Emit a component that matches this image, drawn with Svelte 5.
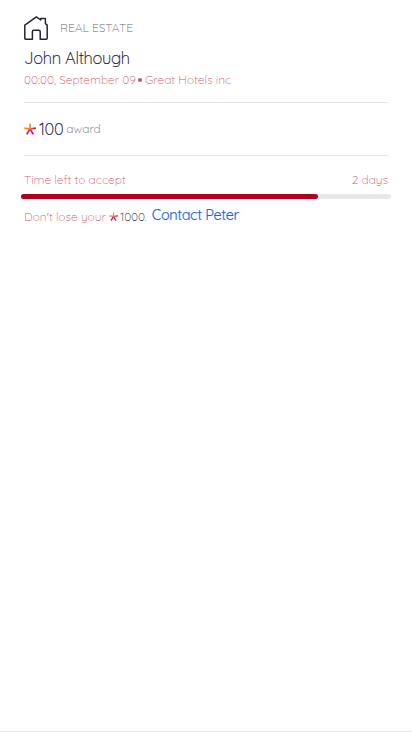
<script>
  const progress = 80.4;
</script>

{#snippet star(size)}
  <svg class="star" width={size} height={size} viewBox="0 0 12 12" fill="none" stroke-width="1.7">
    <defs>
      <linearGradient id="warm" x1="0" y1="0" x2="12" y2="0" gradientUnits="userSpaceOnUse">
        <stop offset="0" stop-color="#ffa000" />
        <stop offset="0.55" stop-color="#f0604d" />
        <stop offset="1" stop-color="#c80050" />
      </linearGradient>
      <linearGradient id="pink" x1="0" y1="5" x2="0" y2="12" gradientUnits="userSpaceOnUse">
        <stop offset="0" stop-color="#e0105a" />
        <stop offset="1" stop-color="#e000b8" />
      </linearGradient>
    </defs>
    <path d="M6 5.9 2.7 11.4M6 5.9l3.3 5.5" stroke="url(#pink)" />
    <path d="M.1 5.2 6 5.8l5.9-.6" stroke="url(#warm)" />
    <path d="M6.1 5.9 6 .6" stroke="#f58a45" />
  </svg>
{/snippet}

<main>
  <header>
    <svg width="24" height="24" viewBox="0 0 24 24" fill="none" stroke="#25233c" stroke-width="1.5" stroke-linejoin="round">
      <path d="M.8 9.1 12.4.9l4.3 3.1V2.5h4.7v5.1l1.8 1.5v13.2q0 .9-.9.9h-6.1v-7.4q0-1.5-1.5-1.5H9.9q-1.5 0-1.5 1.5v7.4H1.7q-.9 0-.9-.9Z" />
    </svg>
    <span class="category">REAL ESTATE</span>
  </header>
  <h1>John Although</h1>
  <div class="details"><span>00:00, September 09</span><i></i><span>Great Hotels inc</span></div>
  <section class="award">
    {@render star(12)}
    <strong>100</strong>
    <span class="label">award</span>
  </section>
  <section class="deadline">
    <div class="row"><span>Time left to accept</span><span>2 days</span></div>
    <div class="track"><div class="fill" style="width: {progress}%"></div></div>
    <div class="hint">
      <span>Don't lose your</span>
      {@render star(9)}
      <span class="amount">1000<em>.</em></span>
      <span class="contact">Contact Peter</span>
    </div>
  </section>
</main>

<style>
  :global(body) { background: #fff; }
  main {
    box-sizing: border-box;
    height: 732px;
    padding: 16px 24px 0;
    border-bottom: 1px solid #e4e4e4;
    font-family: Quicksand, Lato, sans-serif;
    font-size: 12px;
    font-weight: 300;
    letter-spacing: -0.02px;
    color: #c95c67;
    white-space: nowrap;
    overflow: hidden;
  }
  header { display: flex; height: 24px; align-items: center; gap: 12px; }
  header svg, .star { flex: none; display: block; }
  .category { margin-top: -2px; color: #66656f; }
  h1 {
    margin: 6px 0 1px;
    font-size: 16.5px;
    line-height: 24px;
    font-weight: 300;
    letter-spacing: -0.3px;
    color: #25233c;
    -webkit-text-stroke: 0.2px;
  }
  .details {
    display: flex;
    align-items: flex-start;
    height: 31px;
    line-height: 18px;
    border-bottom: 1px solid #e5e5e5;
  }
  .details i { width: 4px; height: 4px; margin: 7px 3px 0 2px; border-radius: 50%; background: #cc5363; }
  .award { display: flex; align-items: center; height: 52px; border-bottom: 1px solid #e5e5e5; }
  .award strong {
    margin: -2px 0 0 3px;
    font-size: 16.5px;
    font-weight: 300;
    letter-spacing: -0.4px;
    color: #25233c;
    -webkit-text-stroke: 0.2px;
  }
  .label { margin: -2px 0 0 3px; color: #66656f; }
  .row { display: flex; justify-content: space-between; padding-top: 15px; line-height: 18px; }
  .track { height: 5px; margin: 5px -2.5px 0 -3px; border-radius: 3px; background: #e8e8e8; }
  .fill { height: 100%; border-radius: 3px; background: #b00020; }
  .hint { display: flex; align-items: center; height: 18px; margin-top: 8px; }
  .hint .star { margin-left: 3px; }
  .amount { margin-left: 2px; color: #25233c; letter-spacing: -0.1px; }
  .amount em { font-style: normal; color: #c95c67; }
  .contact {
    margin: -4px 0 0 5px;
    color: #1666df;
    font-size: 14.5px;
    font-weight: 400;
    letter-spacing: -0.4px;
    -webkit-text-stroke: 0.15px;
  }
</style>
